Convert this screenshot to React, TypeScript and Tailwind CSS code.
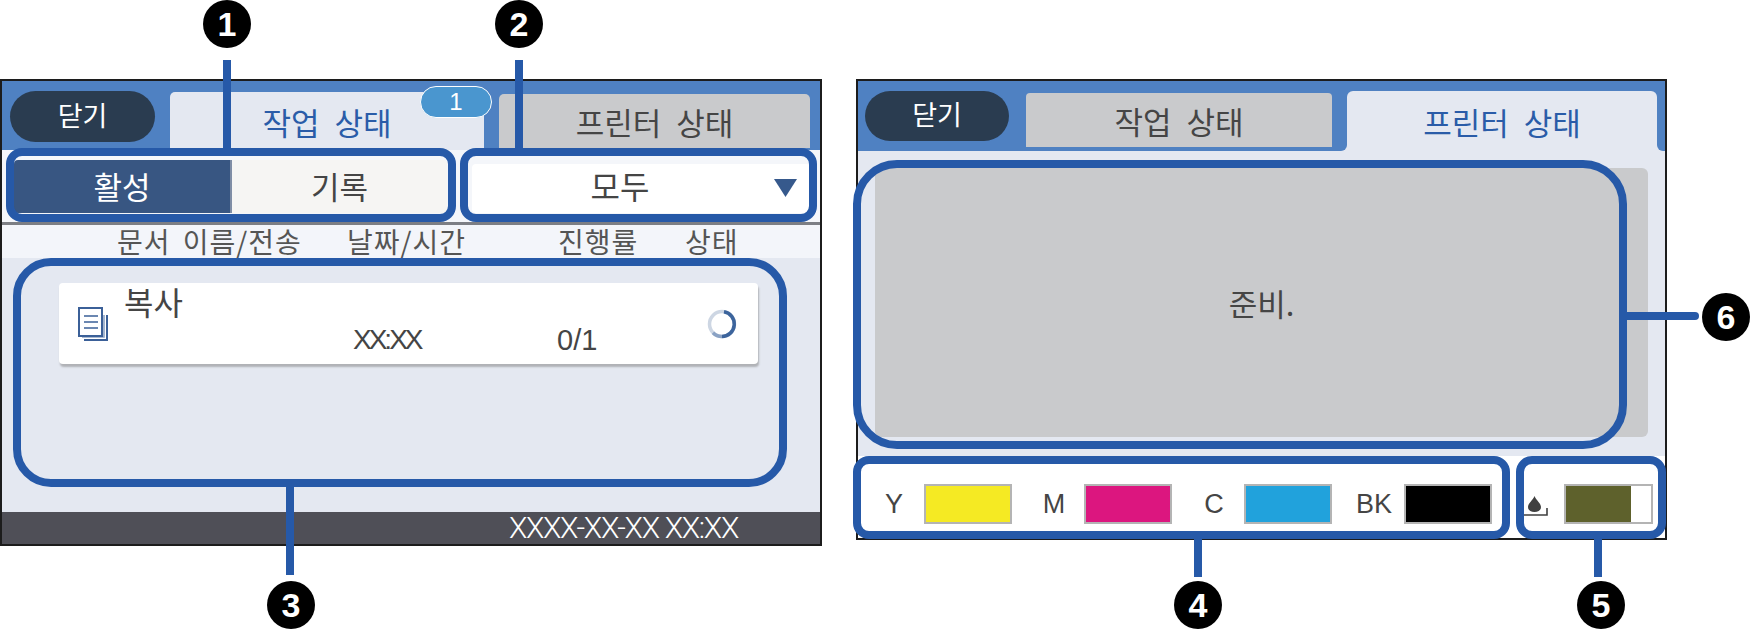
import React from "react";

const kr = "font-['Noto_Sans_CJK_KR','Noto_Sans',sans-serif]";
const tabText = "text-[31px] leading-none [word-spacing:8px] whitespace-nowrap";
const box = "absolute border-[8px] border-[#2659a8]";
const line = "absolute bg-[#2659a8]";

const Marker = ({ n, className }: { n: number; className: string }) => (
  <div
    className={`absolute w-[48px] h-[48px] rounded-full bg-black text-white flex items-center justify-center font-['Liberation_Sans',sans-serif] font-bold text-[34px] leading-none ${className}`}
  >
    {n}
  </div>
);

const Swatch = ({ label, color }: { label: string; color: string }) => (
  <div className="flex items-center mr-[12px]">
    <span className="w-[60px] text-center text-[27px] leading-none text-[#454545] font-['Liberation_Sans',sans-serif]">
      {label}
    </span>
    <div className={`w-[88px] h-[40px] border-2 border-[#b4b4b4] ${color}`} />
  </div>
);

const Spinner = () => (
  <svg width="30" height="30" viewBox="0 0 30 30" fill="none" className="block">
    <circle cx="15" cy="15" r="12.5" stroke="#cdd6e3" strokeWidth="3.5" />
    <path d="M17 2.7 A12.5 12.5 0 0 1 15 27.5" stroke="#3c649c" strokeWidth="3.5" />
    <path d="M15 27.5 A12.5 12.5 0 0 1 6 23.7" stroke="#8aa2c4" strokeWidth="3.5" />
  </svg>
);

const DocIcon = () => (
  <svg width="30" height="34" viewBox="0 0 30 34" fill="none" className="block">
    <path d="M29 8 V33 H6" stroke="#3b6098" strokeWidth="2" />
    <path d="M26 8 V30 H4" stroke="#8ea4c4" strokeWidth="1.6" />
    <rect x="1" y="1" width="23" height="28" fill="#fff" stroke="#3b6098" strokeWidth="2" />
    <path d="M6 9 H20 M6 15 H20 M6 21 H20" stroke="#3b6098" strokeWidth="1.6" />
  </svg>
);

const DropIcon = () => (
  <svg width="24" height="21" viewBox="0 0 24 21" fill="none" className="block">
    <path d="M10.5 1 C12 5 17 8.5 17 12 C17 15.5 14 17 10.5 17 C7 17 4 15.5 4 12 C4 8.5 9 5 10.5 1 Z" fill="#404040" />
    <path d="M0 20 H23 V13" stroke="#404040" strokeWidth="1.6" />
  </svg>
);

const JobsScreen = () => (
  <div className="w-[822px] h-[467px] shrink-0 border-2 border-[#1c1c1c] flex flex-col bg-[#e4e8f1]">
    <div className="h-[69px] shrink-0 bg-[#4f81c2] flex items-end pl-[8px]">
      <button className="self-start mt-[10px] w-[145px] h-[51px] rounded-[26px] bg-[#2a3c50] text-white text-[27px] leading-none pb-[5px] flex items-center justify-center">
        닫기
      </button>
      <div className={`relative ml-[15px] w-[314px] h-[58px] rounded-t-[5px] bg-[#e4e8f1] text-[#2a5ca8] flex items-center justify-center ${tabText}`}>
        작업 상태
        <div className="absolute -top-[6px] left-[250px] w-[72px] h-[32px] rounded-[16px] bg-[#4a96cf] border border-white text-white text-[24px] flex items-center justify-center font-['Liberation_Sans',sans-serif] font-light">
          1
        </div>
      </div>
      <div className={`ml-[15px] mb-[2px] w-[311px] h-[54px] rounded-t-[5px] bg-[#c9cacc] text-[#454545] flex items-center justify-center ${tabText}`}>
        프린터 상태
      </div>
    </div>
    <div className="h-[72px] shrink-0 flex pl-[12px] bg-[#f4f6fa]">
      <div className="mt-[10px] w-[433px] h-[53px] flex text-[31px] leading-none rounded-[4px] overflow-hidden">
        <div className="w-[218px] bg-[#385682] text-white flex items-center justify-center border-r-2 border-[#7f8da5] pb-[2px]">활성</div>
        <div className="flex-1 bg-[#f6f5f3] text-[#454545] flex items-center justify-center pb-[2px]">기록</div>
      </div>
      <div className="relative ml-[25px] mt-[14px] w-[338px] h-[49px] bg-white text-[#454545] text-[32px] leading-none flex items-center justify-center rounded-[4px] pr-[42px] pb-[8px]">
        모두
        <svg className="absolute right-[13px] top-[15px]" width="23" height="18" viewBox="0 0 23 18">
          <path d="M0 0 H23 L11.5 18 Z" fill="#36598c" />
        </svg>
      </div>
    </div>
    <div className="h-[36px] shrink-0 border-t-[3px] border-[#7c7e84] bg-[#f3f5fa] flex items-center pl-[115px] pb-[1px] text-[28px] leading-none tracking-[1px] [word-spacing:5px] text-[#555555] whitespace-nowrap">
      <span className="w-[230px]">문서 이름/전송</span>
      <span className="w-[211px]">날짜/시간</span>
      <span className="w-[127px]">진행률</span>
      <span>상태</span>
    </div>
    <div className="flex-1 pt-[25px] pl-[57px]">
      <div className="w-[699px] h-[81px] rounded-[4px] bg-white shadow-[1px_3px_2px_#b0b2b6] flex text-[#454545] whitespace-nowrap">
        <div className="w-[65px] pl-[19px] pt-[24px]">
          <DocIcon />
        </div>
        <div className="w-[229px] text-[32px] leading-[36px]">복사</div>
        <div className="w-[204px] pt-[43px] text-[28px] leading-[28px] tracking-[-3px] font-['Liberation_Sans',sans-serif]">XX:XX</div>
        <div className="w-[150px] pt-[43px] text-[29px] leading-[28px] font-['Liberation_Sans',sans-serif]">0/1</div>
        <div className="pt-[26px]">
          <Spinner />
        </div>
      </div>
    </div>
    <div className="h-[32px] shrink-0 bg-[#4f4f57] flex items-center justify-end pr-[82px] text-white text-[30px] leading-none tracking-[-1.3px] font-['Roboto',sans-serif] font-light whitespace-nowrap">
      XXXX-XX-XX XX:XX
    </div>
  </div>
);

const PrinterScreen = () => (
  <div className="w-[811px] h-[461px] shrink-0 border-2 border-[#1c1c1c] flex flex-col bg-[#e4e8f1]">
    <div className="h-[70px] shrink-0 flex">
      <div className="w-[489px] bg-[#4f81c2] rounded-br-[6px] flex items-end pl-[7px] pb-[4px]">
        <button className="self-start mt-[10px] w-[144px] h-[50px] rounded-[25px] bg-[#2a3c50] text-white text-[27px] leading-none pb-[5px] flex items-center justify-center">
          닫기
        </button>
        <div className={`ml-[17px] w-[306px] h-[54px] rounded-t-[4px] bg-[#c9cacc] text-[#454545] flex items-center justify-center ${tabText}`}>
          작업 상태
        </div>
      </div>
      <div className="w-[310px] bg-[#4f81c2] pt-[10px]">
        <div className={`h-full rounded-t-[6px] bg-[#e4e8f1] text-[#2a5ca8] flex items-center justify-center ${tabText}`}>
          프린터 상태
        </div>
      </div>
      <div className="flex-1 bg-[#4f81c2] rounded-bl-[6px]" />
    </div>
    <div className="flex-1 pt-[17px] pl-[17px]">
      <div className="w-[773px] h-[269px] rounded-[6px] bg-[#c9cacc] text-[#454545] text-[31px] leading-none flex items-center justify-center">
        준비.
      </div>
    </div>
    <div className="h-[82px] shrink-0 bg-white flex items-start pt-[28px] pl-[6px]">
      <Swatch label="Y" color="bg-[#f5ea23]" />
      <Swatch label="M" color="bg-[#dc167f]" />
      <Swatch label="C" color="bg-[#21a2dc]" />
      <Swatch label="BK" color="bg-black" />
      <div className="ml-[20px] mt-[11px]">
        <DropIcon />
      </div>
      <div className="ml-[16px] w-[89px] h-[40px] border-2 border-[#b4b4b4] bg-white flex">
        <div className="w-[65px] bg-[#5e612c]" />
      </div>
    </div>
  </div>
);

export default function App() {
  return (
    <div className={`relative w-[1750px] h-[629px] bg-white overflow-hidden ${kr}`}>
      <div className="flex items-start gap-[34px] pt-[79px]">
        <JobsScreen />
        <PrinterScreen />
      </div>

      {/* callouts over the screens */}
      <div className={`${box} left-[6px] top-[148px] w-[450px] h-[74px] rounded-[16px]`} />
      <div className={`${box} left-[460px] top-[148px] w-[357px] h-[74px] rounded-[16px]`} />
      <div className={`${box} left-[13px] top-[258px] w-[774px] h-[229px] rounded-[38px]`} />
      <div className={`${box} left-[853px] top-[160px] w-[774px] h-[289px] rounded-[44px]`} />
      <div className={`${box} left-[853px] top-[456px] w-[657px] h-[83px] rounded-[16px]`} />
      <div className={`${box} left-[1516px] top-[456px] w-[150px] h-[83px] rounded-[16px]`} />

      <div className={`${line} left-[223px] top-[60px] w-[8px] h-[88px]`} />
      <div className={`${line} left-[515px] top-[60px] w-[8px] h-[88px]`} />
      <div className={`${line} left-[286px] top-[487px] w-[8px] h-[88px]`} />
      <div className={`${line} left-[1194px] top-[539px] w-[8px] h-[38px]`} />
      <div className={`${line} left-[1594px] top-[539px] w-[8px] h-[38px]`} />
      <div className={`${line} left-[1627px] top-[312px] w-[72px] h-[8px] rounded-r-[4px]`} />

      <Marker n={1} className="left-[203px] top-0" />
      <Marker n={2} className="left-[495px] top-0" />
      <Marker n={3} className="left-[267px] top-[581px]" />
      <Marker n={4} className="left-[1174px] top-[581px]" />
      <Marker n={5} className="left-[1577px] top-[581px]" />
      <Marker n={6} className="left-[1702px] top-[293px]" />
    </div>
  );
}
